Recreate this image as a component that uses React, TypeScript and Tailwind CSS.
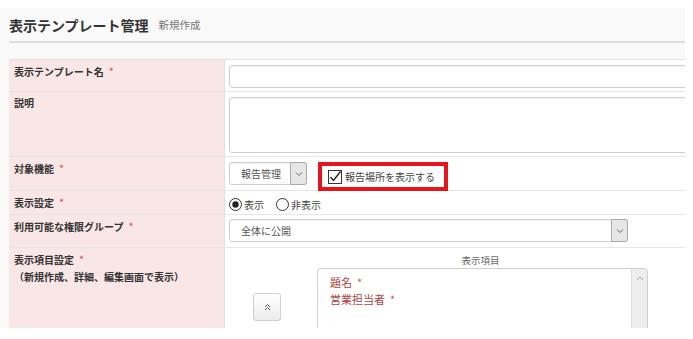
import type { ReactNode } from 'react';

const font = { fontFamily: '"Noto Sans CJK JP", "Noto Sans", sans-serif' };

function Req() {
    return <span className="ml-[5px] text-[11px] font-normal text-[#d9534f]">*</span>;
}

function Label({ children }: { children: ReactNode }) {
    return (
        <div className="w-[216px] shrink-0 border-r border-[#e6dede] bg-[#f9e6e7] pl-[5px] pt-[5px] text-[10px] leading-[12px] font-bold text-[#333]">
            {children}
        </div>
    );
}

function Chevron({ size = 8 }: { size?: number }) {
    return (
        <svg width={size} height={size} viewBox="0 0 8 8" fill="none">
            <path d="M1 2.5 L4 5.5 L7 2.5" stroke="#666" strokeWidth="1" />
        </svg>
    );
}

function SelectBox({ text, width }: { text: string; width: string }) {
    return (
        <div className={`flex h-[23px] ${width} items-stretch rounded-[3px] border border-[#cfcfcf] bg-white shadow-[inset_0_1px_1px_rgba(0,0,0,0.06)]`}>
            <div className="flex flex-1 items-center pl-[11px] text-[10px] text-[#555]">{text}</div>
            <div className="-m-px flex w-[17px] items-center justify-center rounded-r-[3px] border border-[#aaa] bg-[#e6e6e6]">
                <Chevron />
            </div>
        </div>
    );
}

function Radio({ checked }: { checked?: boolean }) {
    return (
        <svg width="13" height="13" viewBox="0 0 13 13">
            <circle cx="6.5" cy="6.5" r="6" fill="white" stroke="#333" strokeWidth="1" />
            {checked && <circle cx="6.5" cy="6.5" r="3.2" fill="#222" />}
        </svg>
    );
}

export default function App() {
    return (
        <div className="h-[339px] w-[693px] overflow-hidden bg-white" style={font}>
            <div className="mt-[8px] h-[320px] w-[685px] overflow-hidden bg-[#f9f9f9] pl-[9px]">
                {/* header */}
                <div className="flex h-[33px] items-center pt-[1px]">
                    <span className="text-[14px] leading-[20px] font-bold text-[#333]">表示テンプレート管理</span>
                    <span className="ml-[10px] text-[10.5px] text-[#777]">新規作成</span>
                </div>
                <div className="h-[2px] bg-[#dedede]" />
                <div className="h-[16px]" />

                {/* table */}
                <div className="w-[720px] border-t border-[#e3e3e3]">
                    <div className="flex h-[32px] border-b border-[#e6e6e6]">
                        <Label>表示テンプレート名<Req /></Label>
                        <div className="flex-1 bg-white pl-[4px] pt-[5px]">
                            <div className="h-[23px] w-[480px] rounded-[3px] border border-[#cfcfcf] bg-white shadow-[inset_0_1px_1px_rgba(0,0,0,0.06)]" />
                        </div>
                    </div>

                    <div className="flex h-[65px] border-b border-[#e6e6e6]">
                        <Label>説明</Label>
                        <div className="flex-1 bg-white pl-[4px] pt-[5px]">
                            <div className="h-[56px] w-[480px] rounded-[3px] border border-[#cfcfcf] bg-white shadow-[inset_0_1px_1px_rgba(0,0,0,0.06)]" />
                        </div>
                    </div>

                    <div className="flex h-[34px] border-b border-[#e6e6e6]">
                        <Label>対象機能<Req /></Label>
                        <div className="relative z-10 flex flex-1 items-start bg-white pl-[4px] pt-[5px]">
                            <SelectBox text="報告管理" width="w-[78px]" />
                            <div className="ml-[11px] flex h-[29px] w-[130px] items-center border-[4px] border-[#e8141c] bg-white pl-[6px]">
                                <svg width="14" height="14" viewBox="0 0 14 14">
                                    <rect x="0.5" y="0.5" width="13" height="13" fill="white" stroke="#333" />
                                    <path d="M0.5 13.5 H13.5" stroke="#333" strokeDasharray="1 1" />
                                    <path d="M2.5 7 L5.5 10.5 L12.5 1.5" fill="none" stroke="#222" strokeWidth="1.4" />
                                </svg>
                                <span className="ml-[3px] text-[10px] text-[#444]">報告場所を表示する</span>
                            </div>
                        </div>
                    </div>

                    <div className="flex h-[24px] border-b border-[#e6e6e6]">
                        <Label>表示設定<Req /></Label>
                        <div className="flex flex-1 items-center bg-white pl-[4px] pt-[3px] text-[10px] text-[#444]">
                            <Radio checked />
                            <span className="ml-[2px]">表示</span>
                            <span className="ml-[12px] flex items-center">
                                <Radio />
                            </span>
                            <span className="ml-[2px]">非表示</span>
                        </div>
                    </div>

                    <div className="flex h-[33px] border-b border-[#e6e6e6]">
                        <Label>利用可能な権限グループ<Req /></Label>
                        <div className="flex-1 bg-white pl-[4px] pt-[4px]">
                            <SelectBox text="全体に公開" width="w-[399px]" />
                        </div>
                    </div>

                    <div className="flex h-[120px]">
                        <Label>
                            表示項目設定<Req />
                            <div className="mt-[5px]">（新規作成、詳細、編集画面で表示）</div>
                        </Label>
                        <div className="flex flex-1 bg-white pl-[28px] pt-[5px]">
                            <div className="mt-[40px] flex h-[28px] w-[28px] items-center justify-center rounded-[3px] border border-[#cfcfcf] bg-gradient-to-b from-white to-[#ececec]">
                                <svg width="7" height="8" viewBox="0 0 7 8" fill="none">
                                    <path d="M1 4 L3.5 1.5 L6 4 M1 7 L3.5 4.5 L6 7" stroke="#555" strokeWidth="1" />
                                </svg>
                            </div>
                            <div className="ml-[36px] flex w-[331px] flex-col">
                                <div className="h-[14px] pr-[4px] text-center text-[9.5px] leading-[14px] text-[#666]">表示項目</div>
                                <div className="mt-[1px] flex h-[80px] rounded-[3px] border border-[#cfcfcf] bg-white">
                                    <div className="flex-1 pl-[12px] pt-[5px] text-[11px] leading-[17px] text-[#a94442]">
                                        <div>題名<Req /></div>
                                        <div>営業担当者<Req /></div>
                                    </div>
                                    <div className="flex w-[16px] justify-center border-l border-[#dcdcdc] bg-[#ededed] pt-[6px]">
                                        <svg width="8" height="6" viewBox="0 0 8 6" fill="none">
                                            <path d="M1 5 L4 2 L7 5" stroke="#aaa" strokeWidth="1" />
                                        </svg>
                                    </div>
                                </div>
                            </div>
                        </div>
                    </div>
                </div>
            </div>
        </div>
    );
}
